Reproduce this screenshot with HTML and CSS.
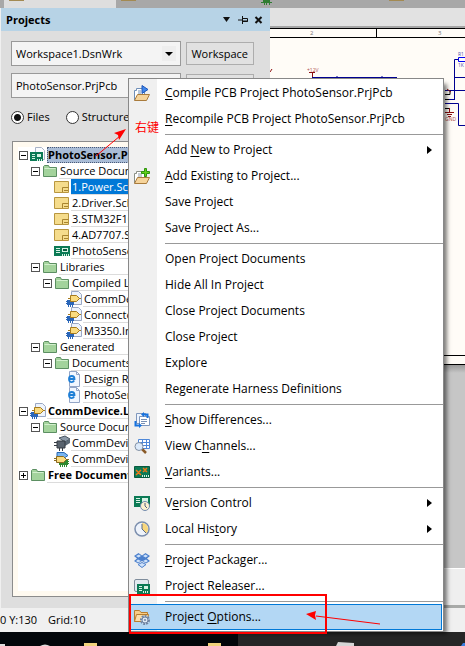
FILE: index.html
```html
<!DOCTYPE html>
<html lang="en">
<head>
    <meta charset="UTF-8">
    <meta name="viewport" content="width=device-width, initial-scale=1.0">
    <title>Projects</title>
    <link rel="stylesheet" href="styles.css">
</head>
<body>
    <!-- Icon set -->
    <svg class="icon-defs" width="0" height="0" aria-hidden="true">
        <symbol id="i-folder" viewBox="0 0 16 16">
            <path d="M1.500 13.500v-10l1-1h4l1 2h7v9z" fill="#a3d39c" stroke="#5c8f62"/>
            <path d="M2.500 5.500h11" stroke="#d2efcd"/>
        </symbol>
        <symbol id="i-sch" viewBox="0 0 16 16">
            <path d="M.5 2.500h14v11h-14z" fill="#f5dc8c" stroke="#b8963f"/>
            <path d="M8.500 13v-4.500h6M10 11.500h4" fill="none" stroke="#a8842f"/>
        </symbol>
        <symbol id="i-pcb" viewBox="0 0 16 16">
            <path d="M0 3h16v10H0z" fill="#0b7a55"/>
            <path d="M2 5h4v1H2zM2 7h4v1H2zM2 9h4v1H2zM8 5h6v4H8zM8 11h1v2H8zM10 11h1v2h-1zM12 11h1v2h-1zM14 11h1v2h-1z" fill="#d6f2e4"/>
            <path d="M9 6h4v2H9z" fill="#0b5a40"/>
        </symbol>
        <symbol id="i-pcbproj" viewBox="0 0 16 16">
            <path d="M5.500 .5h6l3 3v9h-9z" fill="#fbfcff" stroke="#a9b3c6"/>
            <path d="M0 5h13v9H0z" fill="#0b7a55"/>
            <path d="M2 7h3v1H2zM2 9h3v1H2zM2 11h3v1H2zM7 7h4v3H7zM7 12h1v2H7zM9 12h1v2H9zM11 12h1v2h-1z" fill="#d6f2e4"/>
        </symbol>
        <symbol id="i-lib" viewBox="0 0 16 16">
            <path d="M5.500 .5h7l3 3v10h-10z" fill="#edf3fc" stroke="#9aa8c4"/>
            <path d="M1 9h7v5H1zM0 10h1v1H0zM0 12h1v1H0zM2 14h1v2H2zM4 14h1v2H4zM6 14h1v2H6z" fill="#2a66b8"/>
            <path d="M4.500 4.500h6l3 3-3 3h-6z" fill="#fadb7e" stroke="#a77b1d"/>
            <path d="M2 7.500h2M13 7.500h2" stroke="#a77b1d"/>
        </symbol>
        <symbol id="i-web" viewBox="0 0 16 16">
            <path d="M3.500 .5h7l3 3v12h-10z" fill="#f2f7ff" stroke="#93a5c6"/>
            <path d="M10.500 .5v3h3" fill="none" stroke="#93a5c6"/>
            <path d="M2.500 8h6c0-4-5.500-4-5.500 0s4 3.600 5.200 1.500" fill="none" stroke="#1f7fd6" stroke-width="1.800"/>
        </symbol>
        <symbol id="i-chip3d" viewBox="0 0 16 16">
            <path d="M5 3l6-2 5 3-5 3z" fill="#8b99a8" stroke="#4a5663"/>
            <path d="M11 7l5-3v4l-5 3z" fill="#5b6976"/>
            <path d="M3 6h8v7H3z" fill="#59636e" stroke="#343b43"/>
            <path d="M0 7.500h3M0 10.500h3M5.500 13v3M8.500 13v3" stroke="#343b43"/>
        </symbol>
        <symbol id="i-part" viewBox="0 0 16 16">
            <path d="M3 1.500h7l4 3-3 2H3z" fill="#78b4f0" stroke="#2868b4"/>
            <path d="M5 9h9v5H5zM6 14h1v2H6zM8 14h1v2H8zM10 14h1v2h-1zM12 14h1v2h-1zM14 10h1v1h-1zM14 12h1v1h-1z" fill="#2f8a2f"/>
            <path d="M2.500 5.500h7l3 3-3 3h-7z" fill="#fadb7e" stroke="#8a6a20"/>
            <path d="M0 7.500h2M0 9.500h2M12 8.500h3" stroke="#8a6a20"/>
        </symbol>
        <symbol id="i-compile" viewBox="0 0 16 16">
            <path d="M.5 15V5.500h2V3.500h8V10" fill="#fff" stroke="#6f8fb8"/>
            <path d="M4 6h3M4 8h3" stroke="#6f8fb8"/>
            <path d="M8 .5l6 4-6 4z" fill="#3f86ea" stroke="#2157b8"/>
            <path d="M3.500 9.500h12l-3 6H.5z" fill="#f6d49b" stroke="#a97b3c"/>
        </symbol>
        <symbol id="i-add" viewBox="0 0 16 16">
            <path d="M.5 15V5.500h2V3.500h8V10" fill="#fff" stroke="#8a8f86"/>
            <path d="M4 6h4M4 8h4" stroke="#8f9aa8"/>
            <path d="M3.500 9.500h12l-3 6H.5z" fill="#f6d49b" stroke="#a97b3c"/>
            <path d="M10.500 .5h2v3h3v2h-3v3h-2v-3h-3v-2h3z" fill="#62d018" stroke="#2f9210"/>
        </symbol>
        <symbol id="i-diff" viewBox="0 0 16 16">
            <path d="M2.500 1.500h9v10h-9z" fill="#eef4fd" stroke="#7f97bd"/>
            <path d="M5.500 4.500h10v9h-10z" fill="#fff" stroke="#7f97bd"/>
            <path d="M7 7.500h6M7 9.500h6M7 11.500h4" stroke="#7890b4"/>
            <path d="M10 0v5l-3-2.500zM5 11v5l3-2.500z" fill="#1672de"/>
            <path d="M10 2.500h3.500V6M5 13.500H1.500V9" fill="none" stroke="#1672de" stroke-width="2"/>
        </symbol>
        <symbol id="i-channels" viewBox="0 0 16 16">
            <path d="M4.500 1.500h11v9h-11z" fill="#fff" stroke="#4f88d8"/>
            <path d="M4 4.500h11M4 7.500h11M8.500 1v9M12.500 1v9" stroke="#4f88d8"/>
            <path d="M8 11l4 4" stroke="#8a5a28" stroke-width="2.500"/>
            <circle cx="5" cy="8.500" r="4" fill="#dceafa" stroke="#8290a3"/>
        </symbol>
        <symbol id="i-variants" viewBox="0 0 16 16">
            <path d="M.5 2.500h15v11H.5z" fill="#0b7a55" stroke="#075a3e"/>
            <path d="M2 6l5 5M7 6l-5 5M9 4l4 4M13 4L9 8" stroke="#f07818" stroke-width="1.500"/>
            <path d="M8 11h1v2H8zM10 11h1v2h-1zM12 11h1v2h-1zM14 11h1v2h-1z" fill="#d6f2e4"/>
        </symbol>
        <symbol id="i-version" viewBox="0 0 16 16">
            <path d="M0 1h16v11H0z" fill="#0b7a55"/>
            <path d="M2 3h4v1H2zM2 5h4v1H2zM2 7h4v1H2zM8 3h6v4H8z" fill="#d6f2e4"/>
            <circle cx="11" cy="11" r="4.500" fill="#fbf1cf" stroke="#7189ad"/>
            <path d="M11 8v3l2 2" fill="none" stroke="#4c5f80"/>
        </symbol>
        <symbol id="i-history" viewBox="0 0 16 16">
            <circle cx="8" cy="8" r="7" fill="#eef3fb" stroke="#7c8fae" stroke-width="1.500"/>
            <path d="M8 8V2a6 6 0 0 1 4 10.500z" fill="#f8d77c"/>
            <path d="M8 3v5l4 4" fill="none" stroke="#57698a"/>
        </symbol>
        <symbol id="i-packager" viewBox="0 0 16 16">
            <path d="M4.500 1L8 3.500 11.500 1 16 4l-3 2.500L16 9l-4 2.500L8 9l-4 2.500L0 9l3-2.500L0 4z" fill="#4c80cc"/>
            <path d="M2 4l3-1.500L7 4 4.500 5.500zM9 4l2.500-1.500L14 4l-2.500 1.500zM2 9l2-1.500L7 9l-3 1.500zM9 9l3-1.500L14 9l-2 1.500z" fill="#cfe2fa"/>
            <path d="M4 12.500l4-2 4 2-4 3z" fill="#cfe2fa" stroke="#4c80cc"/>
        </symbol>
        <symbol id="i-releaser" viewBox="0 0 16 16">
            <rect x=".5" y="1.500" width="14" height="12" rx="1.500" fill="#e3eaf0" stroke="#7f8d9c"/>
            <path d="M3 6h13v10H3z" fill="#0b7a55"/>
            <path d="M5 8h3v1H5zM5 10h3v1H5zM5 12h3v1H5zM10 8h4v3h-4zM9 13h1v2H9zM11 13h1v2h-1zM13 13h1v2h-1z" fill="#d6f2e4"/>
        </symbol>
        <symbol id="i-options" viewBox="0 0 16 16">
            <path d="M.5 12.500v-11h5l1.500 2h6.500v9z" fill="#f8cd86" stroke="#b87d2e"/>
            <path d="M.5 12.500l2-7h12l-1.500 7z" fill="#fbdda8" stroke="#b87d2e"/>
            <circle cx="11" cy="11" r="4" fill="#e6edf5" stroke="#6e84a3" stroke-width="2" stroke-dasharray="2 1"/>
            <circle cx="11" cy="11" r="3" fill="#dfe8f2" stroke="#6e84a3"/>
            <circle cx="11" cy="11" r="1" fill="#6e84a3"/>
        </symbol>
    </svg>

    <div class="tabs">
        <span class="tab active"></span>
        <svg class="tab-icons" width="300" height="8" aria-hidden="true">
            <path d="M5 0h15v1H5zM273 0h15v1h-15z" fill="#a38a52"/>
            <path d="M147 0h7v2h2v1h-11V2h2zM148 3h1v2h-1zM150 3h1v2h-1zM153 3h1v2h-1z" fill="#2f7d32"/>
        </svg>
    </div>

    <div class="workspace">
        <section class="panel">
            <header class="panel-header">
                <h1>Projects</h1>
                <svg width="40" height="12" viewBox="0 0 40 12" aria-hidden="true">
                    <path d="M0 3h7L3.500 8z" fill="#111"/>
                    <path d="M15 6h4M19.500 2v8M20 4.500h4.500v3H20M20 7h5" fill="none" stroke="#111"/>
                    <path d="M32.500 3l6 6M38.500 3l-6 6" stroke="#111" stroke-width="2"/>
                </svg>
            </header>

            <div class="controls">
                <select class="combo" aria-label="Workspace file"><option>Workspace1.DsnWrk</option></select>
                <button class="btn">Workspace</button>
                <select class="combo" aria-label="Project file"><option>PhotoSensor.PrjPcb</option></select>
                <button class="btn" aria-label="Project"></button>
            </div>

            <div class="views">
                <label><input type="radio" name="view" checked>Files</label>
                <label><input type="radio" name="view">Structure</label>
            </div>

            <div class="tree">
                <ul>
                    <li>
                        <div class="row root current"><i class="exp"></i><svg><use href="#i-pcbproj"/></svg><span>PhotoSensor.PrjPcb</span></div>
                        <ul>
                            <li>
                                <div class="row"><i class="exp"></i><svg><use href="#i-folder"/></svg><span>Source Documents</span></div>
                                <ul>
                                    <li class="row selected"><svg><use href="#i-sch"/></svg><span>1.Power.SchDoc</span></li>
                                    <li class="row"><svg><use href="#i-sch"/></svg><span>2.Driver.SchDoc</span></li>
                                    <li class="row"><svg><use href="#i-sch"/></svg><span>3.STM32F10x.SchDoc</span></li>
                                    <li class="row"><svg><use href="#i-sch"/></svg><span>4.AD7707.SchDoc</span></li>
                                    <li class="row"><svg><use href="#i-pcb"/></svg><span>PhotoSensor.PcbDoc</span></li>
                                </ul>
                            </li>
                            <li>
                                <div class="row"><i class="exp"></i><svg><use href="#i-folder"/></svg><span>Libraries</span></div>
                                <ul>
                                    <li>
                                        <div class="row"><i class="exp"></i><svg><use href="#i-folder"/></svg><span>Compiled Libraries</span></div>
                                        <ul>
                                            <li class="row"><svg><use href="#i-lib"/></svg><span>CommDevice.IntLib</span></li>
                                            <li class="row"><svg><use href="#i-lib"/></svg><span>Connector.IntLib</span></li>
                                            <li class="row"><svg><use href="#i-lib"/></svg><span>M3350.IntLib</span></li>
                                        </ul>
                                    </li>
                                </ul>
                            </li>
                            <li>
                                <div class="row"><i class="exp"></i><svg><use href="#i-folder"/></svg><span>Generated</span></div>
                                <ul>
                                    <li>
                                        <div class="row"><i class="exp"></i><svg><use href="#i-folder"/></svg><span>Documents</span></div>
                                        <ul>
                                            <li class="row"><svg><use href="#i-web"/></svg><span>Design Rule Check</span></li>
                                            <li class="row"><svg><use href="#i-web"/></svg><span>PhotoSensor.html</span></li>
                                        </ul>
                                    </li>
                                </ul>
                            </li>
                        </ul>
                    </li>
                    <li>
                        <div class="row root"><i class="exp"></i><svg><use href="#i-lib"/></svg><span>CommDevice.LibPkg</span></div>
                        <ul>
                            <li>
                                <div class="row"><i class="exp"></i><svg><use href="#i-folder"/></svg><span>Source Documents</span></div>
                                <ul>
                                    <li class="row"><svg><use href="#i-chip3d"/></svg><span>CommDevice.PcbLib</span></li>
                                    <li class="row"><svg><use href="#i-part"/></svg><span>CommDevice.SchLib</span></li>
                                </ul>
                            </li>
                        </ul>
                    </li>
                    <li>
                        <div class="row root"><i class="exp closed"></i><svg><use href="#i-folder"/></svg><span>Free Documents</span></div>
                    </li>
                </ul>
            </div>
        </section>

        <main class="editor">
            <div class="editor-bar"></div>
            <div class="sheet">
                <svg width="196" height="337" viewBox="269 28 196 337">
                    <path d="M269 28.500h196M269 37.500h196M375.500 28v9M269 355.500h196M269 364.500h196" stroke="#000"/>
                    <g class="sheet-text">
                        <text x="309" y="35">2</text>
                        <text x="437" y="35">3</text>
                        <text x="306" y="72" class="net">+12V</text>
                        <text x="444" y="121" class="net">GND</text>
                        <text x="457" y="56" class="ref">R1</text>
                        <text x="457" y="67" class="ref">1K</text>
                    </g>
                    <path d="M269 72l2-3M308 72.500h6M311.500 73v5" stroke="#8c1010" fill="none"/>
                    <path d="M311 77.500h85M336 76v2M381 76v2M453.500 99V59.500h4M453 77.500h12M444 90.500h21M445 99.500h9M444 103.500h13.500v22h8" stroke="#000090" fill="none"/>
                    <path d="M457.500 57.500h8v4h-8z" stroke="#0000f0" fill="#fff"/>
                    <path d="M444 94.500h5v-4M444 99.500h4M444 108.500h5" stroke="#000" fill="none"/>
                    <path d="M448.500 108v4M444 112.500h9M446 114.500h5M447 116.500h3M446 89l4 3" stroke="#8c1010" fill="none"/>
                </svg>
            </div>
            <div class="editor-void"></div>
            <div class="editor-foot"></div>
        </main>
    </div>

    <footer class="statusbar"><span>0 Y:130</span><span>Grid:10</span></footer>
    <div class="taskbar">
        <svg width="465" height="14" viewBox="0 632 465 14" aria-hidden="true">
            <path d="M238 632h227v14H238z" fill="#262626"/>
            <path d="M0 644h5v2H0z" fill="#ddd"/>
            <path d="M40 646q5-3 10 0z" fill="#ddd"/>
            <path d="M84 643h13v3H84zM208 643h13v3h-13z" fill="#f0d27c"/>
            <path d="M338 642l16 1v3h-18z" fill="#d5d5d5"/>
            <path d="M461 646l2-3h2v3z" fill="#3b7de0"/>
        </svg>
    </div>

    <!-- Context menu -->
    <div class="menu" role="menu">
        <button role="menuitem"><svg><use href="#i-compile"/></svg><span><u>C</u>ompile PCB Project PhotoSensor.PrjPcb</span></button>
        <button role="menuitem"><span><u>R</u>ecompile PCB Project PhotoSensor.PrjPcb</span></button>
        <hr>
        <button role="menuitem" class="sub"><span>Add <u>N</u>ew to Project</span></button>
        <button role="menuitem"><svg><use href="#i-add"/></svg><span><u>A</u>dd Existing to Project...</span></button>
        <button role="menuitem"><span>Save Project</span></button>
        <button role="menuitem"><span>Save Project As...</span></button>
        <hr>
        <button role="menuitem"><span>Open Project Documents</span></button>
        <button role="menuitem"><span>Hide All In Project</span></button>
        <button role="menuitem"><span>Close Project Documents</span></button>
        <button role="menuitem"><span>Close Project</span></button>
        <button role="menuitem"><span>Explore</span></button>
        <button role="menuitem"><span>Regenerate Harness Definitions</span></button>
        <hr>
        <button role="menuitem"><svg><use href="#i-diff"/></svg><span><u>S</u>how Differences...</span></button>
        <button role="menuitem"><svg><use href="#i-channels"/></svg><span>View C<u>h</u>annels...</span></button>
        <button role="menuitem"><svg><use href="#i-variants"/></svg><span><u>V</u>ariants...</span></button>
        <hr>
        <button role="menuitem" class="sub"><svg><use href="#i-version"/></svg><span>V<u>e</u>rsion Control</span></button>
        <button role="menuitem" class="sub"><svg><use href="#i-history"/></svg><span>Local His<u>t</u>ory</span></button>
        <hr>
        <button role="menuitem"><svg><use href="#i-packager"/></svg><span><u>P</u>roject Packager...</span></button>
        <button role="menuitem"><svg><use href="#i-releaser"/></svg><span>Project Releaser...</span></button>
        <hr>
        <button role="menuitem" class="hot"><svg><use href="#i-options"/></svg><span>Project <u>O</u>ptions...</span></button>
    </div>

    <!-- Red notes -->
    <svg class="notes" width="465" height="646" viewBox="0 0 465 646">
        <path d="M96 156l24-20M380 624l-64-8" stroke="#f00" fill="none"/>
        <path d="M126 129l-12 4 4 2 1 5zM306 614l10-3-1 4 1 5z" fill="#f00"/>
        <path d="M130 595h196v38H130z" stroke="#f00" stroke-width="2" fill="none"/>
        <text x="135" y="132" lang="zh">右键</text>
    </svg>
</body>
</html>
```
FILE: styles.css
```css
* {
    margin: 0;
    padding: 0;
    box-sizing: border-box;
}

body {
    position: relative;
    display: flex;
    flex-direction: column;
    min-height: 100vh;
    overflow: hidden;
    background: #dedede;
    color: #000;
    font: 11px/16px "Open Sans", "Noto Sans", sans-serif;
}

button, select, input {
    font: inherit;
    color: inherit;
}

.icon-defs {
    position: absolute;
}

/* Document tabs */
.tabs {
    display: flex;
    height: 8px;
    padding-left: 4px;
    background: #a8a8a8;
}

.tab {
    width: 112px;
    background: linear-gradient(#a38a52, #a38a52) 5px 0 / 15px 1px no-repeat #dedede;
}

.workspace {
    flex: 1;
    display: flex;
}

/* Projects panel */
.panel {
    width: 58%;
    display: flex;
    flex-direction: column;
    border-left: 1px solid #f0f0f0;
    padding-bottom: 11px;
}

.panel-header {
    display: flex;
    align-items: center;
    justify-content: space-between;
    height: 23px;
    padding: 0 7px 0 5px;
    background: #b7d3e6;
}

.panel-header h1 {
    font-size: 11px;
}

.controls {
    display: grid;
    grid-template-columns: 1fr 68px;
    gap: 7px 5px;
    align-items: center;
    padding: 10px 16px 0 10px;
}

.combo {
    appearance: none;
    height: 25px;
    padding: 0 4px;
    border: 1px solid #999;
    border-radius: 0;
    background: url("data:image/svg+xml,%3Csvg xmlns='http://www.w3.org/2000/svg' width='14' height='15'%3E%3Cpath d='M0 0h14v15H0z' fill='%23eee'/%3E%3Cpath d='M3 6h8l-4 4z'/%3E%3C/svg%3E") right 4px center no-repeat #f4f4f4;
}

.btn {
    height: 23px;
    border: 1px solid #adadad;
    background: #e1e1e1;
}

.views {
    display: flex;
    gap: 16px;
    padding: 11px 10px;
    line-height: 16px;
}

.views label {
    display: flex;
    align-items: center;
    gap: 3px;
}

.views input {
    appearance: none;
    width: 13px;
    height: 13px;
    border: 1px solid #333;
    border-radius: 50%;
    background: #fff;
}

.views input:checked {
    background: radial-gradient(circle, #111 3px, #fff 4px);
}

/* Project tree */
.tree {
    flex: 1;
    margin: 5px 15px 0 11px;
    padding: 5px;
    border: 1px solid #8c8c8c;
    background: #fffaf0;
    overflow: hidden;
}

.tree > ul {
    height: 100%;
    padding-left: 1px;
    background: #fff;
}

.tree ul {
    list-style: none;
}

.tree ul ul {
    padding-left: 12px;
}

.row {
    display: flex;
    align-items: center;
    height: 16px;
}

.row svg {
    flex: none;
    width: 16px;
    height: 16px;
    margin-right: 1px;
}

.row span {
    flex: 1;
    height: 16px;
    padding-left: 1px;
    border-bottom: 1px solid #dcdcdc;
    line-height: 15px;
    white-space: nowrap;
}

li.row {
    padding-left: 11px;
}

.root span {
    font-weight: bold;
}

.row.current span {
    background: #a9bcd6;
    border: 1px dotted #4a5a78;
    padding-left: 0;
    line-height: 14px;
}

.selected span {
    background: #0078d7;
    color: #fff;
}

.exp {
    flex: none;
    width: 9px;
    height: 9px;
    margin-right: 2px;
    border: 1px solid #555;
    background: linear-gradient(#000, #000) center / 5px 1px no-repeat #fff;
}

.exp.closed {
    background: linear-gradient(#000, #000) center / 5px 1px no-repeat,
        linear-gradient(#000, #000) center / 1px 5px no-repeat #fff;
}

/* Schematic editor */
.editor {
    flex: 1;
    display: flex;
    flex-direction: column;
    min-width: 0;
}

.editor-bar {
    height: 20px;
    background: #e2e2e2;
    border-bottom: 2px solid #a5a5a5;
}

.sheet {
    background: #fffcf7;
    overflow: hidden;
}

.sheet svg {
    display: block;
}

.sheet-text {
    font-size: 6px;
    fill: #777;
}

.sheet-text .net {
    font-size: 5px;
    fill: #b05050;
}

.sheet-text .ref {
    font-size: 5px;
    fill: #5050b0;
}

.editor-void {
    flex: 1;
    background: linear-gradient(#999, #c6c6c6 8px);
}

.editor-foot {
    height: 40px;
    background: #efefef;
    border-top: 1px solid #fff;
    border-bottom: 3px solid #a8aaa8;
}

.statusbar {
    display: flex;
    align-items: center;
    gap: 11px;
    height: 24px;
    background: #f0f0f0;
}

.taskbar {
    height: 14px;
    background: #02060a;
    overflow: hidden;
}

.taskbar svg {
    display: block;
}

/* Context menu */
.menu {
    position: absolute;
    top: 78px;
    left: 128px;
    width: 316px;
    padding: 1px;
    border: 1px solid #888;
    background: linear-gradient(90deg, #f0f0f0 28px, #fff 28px);
    box-shadow: 5px 4px 4px -2px rgba(0, 0, 0, 0.5);
    font-size: 12px;
}

.menu button {
    display: flex;
    align-items: center;
    width: 100%;
    height: 26px;
    padding: 0 10px 0 4px;
    border: 0;
    background: none;
    text-align: left;
    white-space: nowrap;
}

.menu svg {
    width: 16px;
    height: 16px;
    margin-right: -16px;
}

.menu span {
    flex: 1;
    padding-left: 31px;
}

.menu u {
    text-underline-offset: 2px;
}

.menu .sub::after {
    content: "";
    border: 4px solid transparent;
    border-left: 5px solid #000;
    border-right: 0;
}

.menu .hot {
    background: #b3d7f4;
    outline: 1px solid #0078d7;
    outline-offset: -1px;
}

.menu hr {
    height: 1px;
    margin: 2px -1px 2px 35px;
    border: 0;
    background: #999;
}

.notes {
    position: absolute;
    top: 0;
    left: 0;
    pointer-events: none;
}

.notes text {
    fill: #f00;
    font: 12px "Noto Sans CJK SC", sans-serif;
}
```
